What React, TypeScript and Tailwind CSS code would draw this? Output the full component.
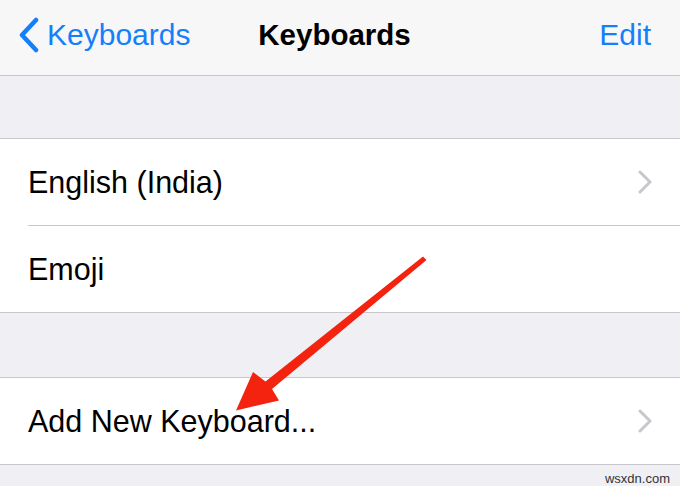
import React from "react";

const font = { fontFamily: '"Liberation Sans", Arial, sans-serif' };

function Chevron() {
  return (
    <svg width="14" height="24" viewBox="0 0 14 24" className="shrink-0">
      <path d="M2 2 L12 12 L2 22" fill="none" stroke="#c7c7cc" strokeWidth="3" strokeLinecap="round" strokeLinejoin="round" />
    </svg>
  );
}

function Row({ label, chevron, className }: { label: string; chevron?: boolean; className: string }) {
  return (
    <div className={`flex items-center justify-between pr-[28px] ${className}`}>
      <span className="text-[30.5px] text-black leading-none">{label}</span>
      {chevron && <Chevron />}
    </div>
  );
}

export default function App() {
  return (
    <div className="relative w-[680px] h-[486px] overflow-hidden bg-[#efeff4]" style={font}>
      {/* Nav bar */}
      <div className="h-[76px] bg-[#f7f7f7] border-b border-[#c8c7cc] flex items-center px-[18px] pb-[5px]">
        <div className="flex-1 flex items-center gap-[7px] text-[#157efb]">
          <svg width="22" height="36" viewBox="0 0 22 36">
            <path d="M18 3 L4 18 L18 33" fill="none" stroke="#157efb" strokeWidth="4.5" strokeLinecap="round" strokeLinejoin="round" />
          </svg>
          <span className="text-[30px] leading-none">Keyboards</span>
        </div>
        <span className="text-[29.5px] font-bold text-black leading-none">Keyboards</span>
        <div className="flex-1 flex justify-end pr-[11px]">
          <span className="text-[30px] text-[#157efb] leading-none">Edit</span>
        </div>
      </div>

      {/* Spacer */}
      <div className="h-[62px]" />

      {/* Group 1 */}
      <div className="bg-white border-t border-b border-[#c8c7cc] pl-[28px]">
        <Row label="English (India)" chevron className="h-[87px] border-b border-[#c8c7cc]" />
        <Row label="Emoji" className="h-[86px]" />
      </div>

      <div className="h-[64px]" />

      {/* Group 2 */}
      <div className="bg-white border-t border-b border-[#c8c7cc] pl-[28px]">
        <Row label="Add New Keyboard..." chevron className="h-[86px]" />
      </div>

      <div className="flex justify-end pr-[10px] pt-[7px]">
        <span className="text-[13px] text-[#333] leading-none">wsxdn.com</span>
      </div>

      {/* Red arrow annotation */}
      <svg className="absolute inset-0 pointer-events-none" width="680" height="486" viewBox="0 0 680 486">
        <polygon
          points="423,256.5 426.5,260 272,389 279,400.5 236,410.5 253,372 265.5,381.5"
          fill="#f3230f"
        />
      </svg>
    </div>
  );
}
